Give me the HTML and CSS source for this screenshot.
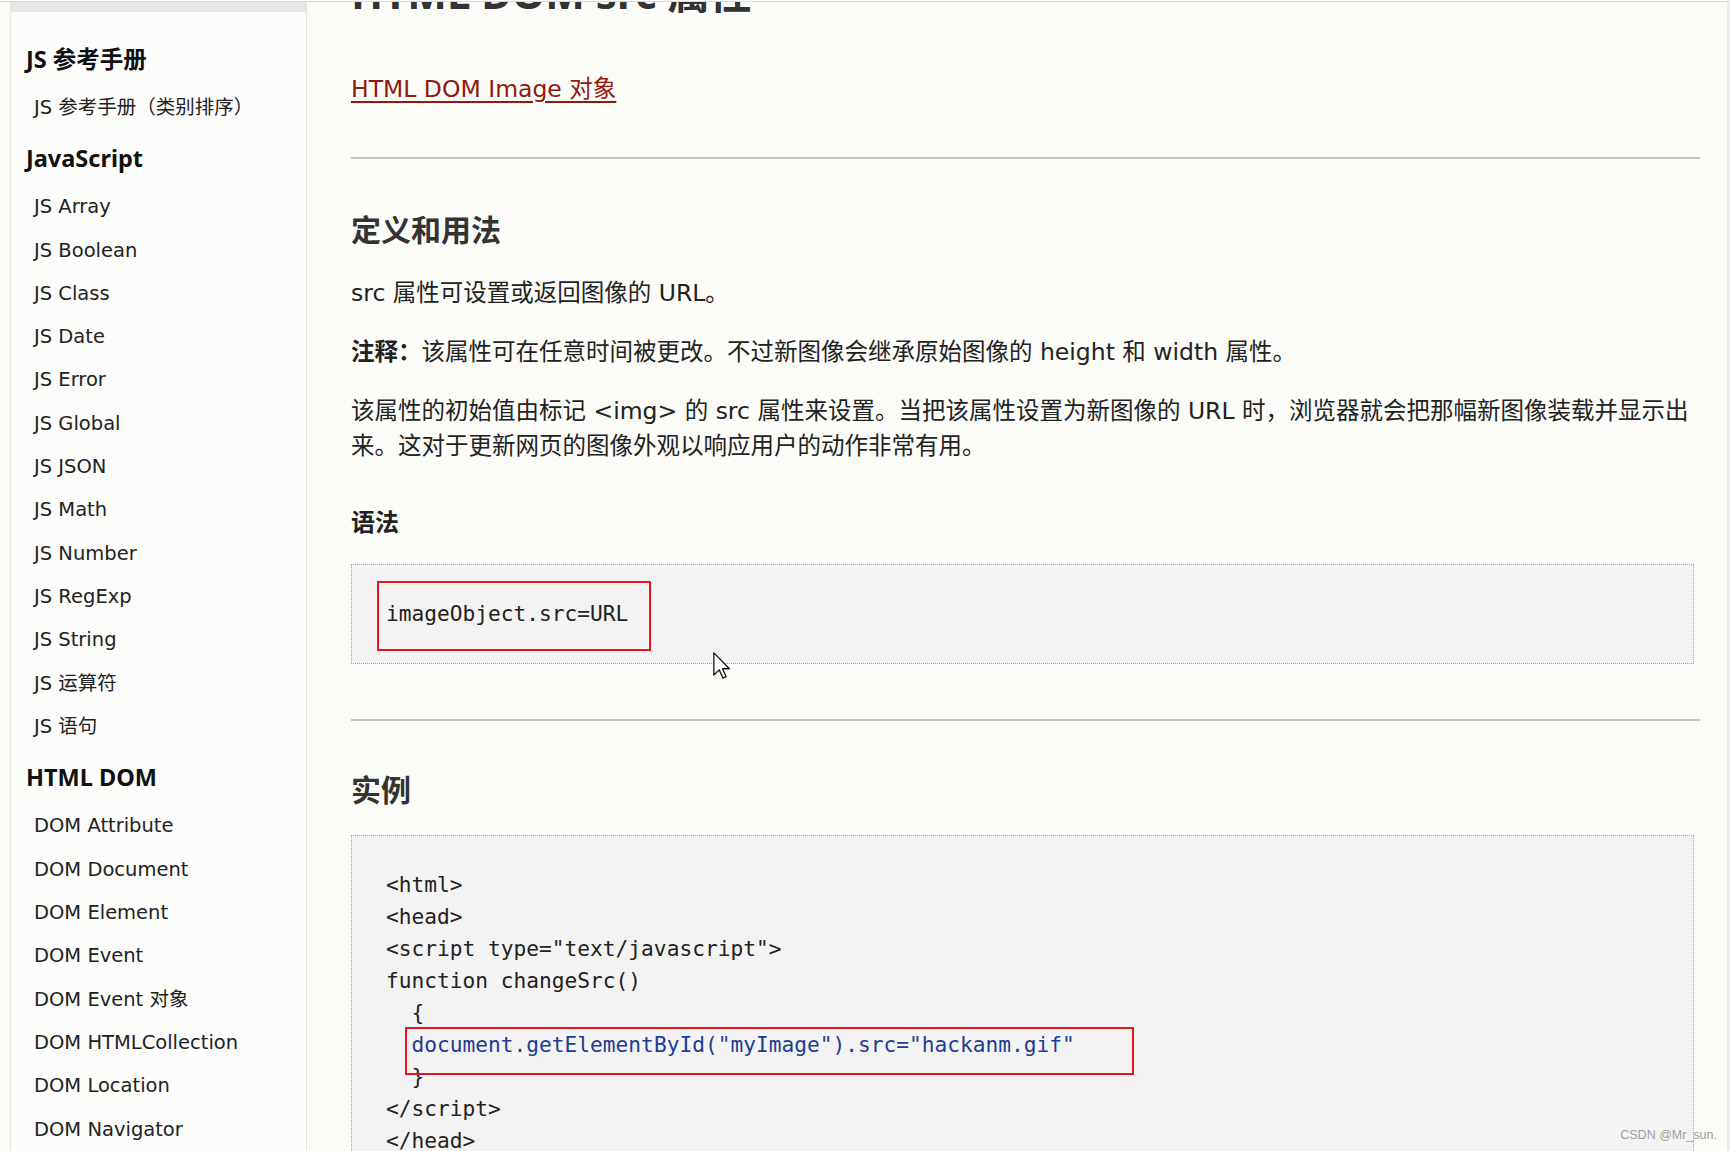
FILE: index.html
```html
<!DOCTYPE html>
<html lang="zh-CN">
<head>
<meta charset="utf-8">
<title>HTML DOM src 属性</title>
<link rel="stylesheet" href="styles.css">
</head>
<body>
<div class="topline"></div>
<div class="page">
  <aside class="sidebar">
    <h2 class="side-title first">JS 参考手册</h2>
    <ul class="side-list">
      <li>JS 参考手册（类别排序）</li>
    </ul>
    <h2 class="side-title">JavaScript</h2>
    <ul class="side-list">
      <li>JS Array</li>
      <li>JS Boolean</li>
      <li>JS Class</li>
      <li>JS Date</li>
      <li>JS Error</li>
      <li>JS Global</li>
      <li>JS JSON</li>
      <li>JS Math</li>
      <li>JS Number</li>
      <li>JS RegExp</li>
      <li>JS String</li>
      <li>JS 运算符</li>
      <li>JS 语句</li>
    </ul>
    <h2 class="side-title">HTML DOM</h2>
    <ul class="side-list dom">
      <li>DOM Attribute</li>
      <li>DOM Document</li>
      <li>DOM Element</li>
      <li>DOM Event</li>
      <li>DOM Event 对象</li>
      <li>DOM HTMLCollection</li>
      <li>DOM Location</li>
      <li>DOM Navigator</li>
      <li>DOM Screen</li>
    </ul>
  </aside>
  <main class="main">
    <h1 class="title">HTML DOM src 属性</h1>
    <p class="backlink"><a href="#">HTML DOM Image 对象</a></p>
    <hr class="rule">
    <h2 class="sec">定义和用法</h2>
    <p class="para first">src 属性可设置或返回图像的 URL。</p>
    <p class="para"><b>注释：</b>该属性可在任意时间被更改。不过新图像会继承原始图像的 height 和 width 属性。</p>
    <p class="para">该属性的初始值由标记 &lt;img&gt; 的 src 属性来设置。当把该属性设置为新图像的 URL 时，浏览器就会把那幅新图像装载并显示出来。这对于更新网页的图像外观以响应用户的动作非常有用。</p>
    <h3 class="sub">语法</h3>
    <div class="code code-syntax">
      <pre>imageObject.src=URL</pre>
      <span class="mark mark-1"></span>
    </div>
    <hr class="rule rule-2">
    <h2 class="sec sec-2">实例</h2>
    <div class="code code-example">
<pre>&lt;html&gt;
&lt;head&gt;
&lt;script type="text/javascript"&gt;
function changeSrc()
  {
  <span class="hl">document.getElementById("myImage").src="hackanm.gif"</span>
  }
&lt;/script&gt;
&lt;/head&gt;

&lt;body&gt;
&lt;img id="myImage" src="compman.gif" /&gt;</pre>
      <span class="mark mark-2"></span>
    </div>
  </main>
  <div class="scrollbar"></div>
</div>
<svg class="cursor" width="17" height="27" viewBox="0 0 12 19" aria-hidden="true">
  <polygon points="0.6,0.6 0.6,16.2 4.4,12.6 7.1,18.4 9.3,17.4 6.7,11.8 11.6,11.8" fill="#ffffff" stroke="#111111" stroke-width="0.9" stroke-linejoin="round"/>
</svg>
<div class="watermark">CSDN @Mr_sun.</div>
</body>
</html>
```

FILE: styles.css
```css
html, body {
  margin: 0;
  padding: 0;
}

body {
  position: relative;
  height: 1151px;
  overflow: hidden;
  background: #fbfbf7;
  color: #222222;
  font-family: "DejaVu Sans", "Noto Sans CJK SC", sans-serif;
}

.topline {
  height: 1px;
  background: #ffffff;
  border-bottom: 1px solid #d8d8d8;
}

.page {
  display: flex;
  height: 1149px;
  overflow: hidden;
}

/* ---------- sidebar ---------- */
.sidebar {
  flex: 0 0 297px;
  box-sizing: border-box;
  margin-left: 10px;
  padding-top: 32px;
  background: #fcfcfa;
  border-top: 10px solid #e7e7e5;
  border-left: 1px solid #e6e6e4;
  border-right: 1px solid #e3e3e1;
}

.side-title {
  margin: 14px 0 12px;
  padding-left: 15px;
  font-family: "Noto Sans", "Noto Sans CJK SC", sans-serif;
  font-size: 23.5px;
  font-weight: 700;
  line-height: 30px;
  color: #111111;
}

.side-title.first {
  margin-top: 0;
}

.side-list {
  list-style: none;
  margin: 0;
  padding: 0 0 0 23px;
  font-size: 19.5px;
  line-height: 43.3px;
  color: #222222;
}

.side-list.dom {
  line-height: 43.35px;
}

/* ---------- main ---------- */
.main {
  flex: 0 0 1349px;
  margin-left: 44px;
}

.title {
  margin: -34px 0 0;
  font-family: "Noto Sans", "Noto Sans CJK SC", sans-serif;
  font-size: 42px;
  font-weight: 700;
  line-height: 50px;
  color: #333333;
  white-space: nowrap;
}

.backlink {
  margin: 53.7px 0 0;
  font-size: 23.5px;
  line-height: 35px;
}

.backlink a {
  color: #8f1a0e;
  text-decoration: underline;
  text-underline-offset: 4px;
  text-decoration-thickness: 1.5px;
}

.rule {
  margin: 50.3px 0 0;
  height: 2px;
  border: 0;
  background: #c6c6c4;
}

.sec {
  margin: 48px 0 0;
  font-family: "Noto Sans", "Noto Sans CJK SC", sans-serif;
  font-size: 30px;
  font-weight: 700;
  line-height: 45px;
  color: #333333;
}

.para {
  margin: 24px 0 0;
  font-size: 23.5px;
  line-height: 35px;
  color: #222222;
}

.para.first {
  margin-top: 24.5px;
}

.para b {
  font-weight: 700;
}

.sub {
  margin: 39.5px 0 0;
  font-family: "Noto Sans", "Noto Sans CJK SC", sans-serif;
  font-size: 24px;
  font-weight: 700;
  line-height: 36px;
  color: #222222;
}

.code {
  position: relative;
  margin: 24px 6px 0 0;
  padding: 33px 34px;
  background: #f3f3f3;
  border: 1px dotted #a6a6a6;
}

.code pre {
  margin: 0;
  font-family: "DejaVu Sans Mono", "Liberation Mono", monospace;
  font-size: 21.2px;
  line-height: 32px;
  color: #222222;
}

.hl {
  color: #1d3c94;
}

.rule-2 {
  margin-top: 55px;
}

.sec-2 {
  margin-top: 46.5px;
}

.code-example {
  margin-top: 22.5px;
}

/* annotation rectangles drawn over the code */
.mark {
  position: absolute;
  box-sizing: border-box;
  border: 2px solid #e8141c;
  pointer-events: none;
}

.mark-1 {
  left: 25px;
  top: 16px;
  width: 274px;
  height: 70px;
}

.mark-2 {
  left: 53px;
  top: 191px;
  width: 729px;
  height: 48px;
}

.scrollbar {
  margin-left: auto;
  width: 3px;
  background: #ececec;
}

/* ---------- overlays ---------- */
.cursor {
  position: absolute;
  left: 713px;
  top: 652px;
}

.watermark {
  position: absolute;
  right: 13px;
  bottom: 9px;
  font-family: "Liberation Sans", Arial, sans-serif;
  font-size: 12.5px;
  color: #9c9c9c;
  text-shadow: 0 0 1px #ffffff;
}
```
